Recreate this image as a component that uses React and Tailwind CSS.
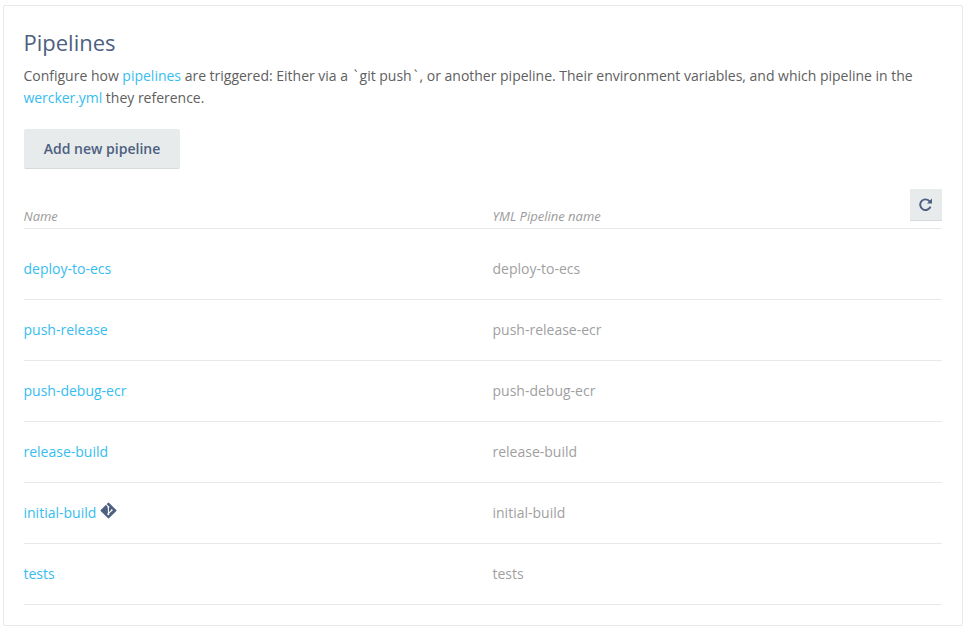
import React from "react";

const pipelines = [
  { name: "deploy-to-ecs", yml: "deploy-to-ecs" },
  { name: "push-release", yml: "push-release-ecr" },
  { name: "push-debug-ecr", yml: "push-debug-ecr" },
  { name: "release-build", yml: "release-build" },
  { name: "initial-build", yml: "initial-build", git: true },
  { name: "tests", yml: "tests" },
];

function GitIcon() {
  return (
    <svg className="-mt-[5px] ml-1 h-[17px] w-[17px]" viewBox="0 0 16 16">
      <path d="M8 1 L15 8 L8 15 L1 8 Z" fill="#4d5f80" stroke="#4d5f80" strokeLinejoin="round" />
      <path d="M5.8 2.2 L7.9 4.4 V11.5 M8 10.8 L11 7.8" stroke="#fff" strokeWidth="1" fill="none" />
      <circle cx="7.9" cy="4.8" r="0.9" fill="#fff" />
      <circle cx="7.8" cy="11.5" r="1" fill="#fff" />
      <circle cx="11" cy="7.8" r="0.9" fill="#fff" />
    </svg>
  );
}

function RefreshIcon() {
  return (
    <svg className="mr-px h-[13px] w-[13px]" viewBox="0 0 12 12" fill="none">
      <path d="M9.9 3.2 A4.9 4.9 0 1 0 10.6 7.9" stroke="#4d5f80" strokeWidth="1.8" />
      <path d="M12 0.4 V5 H7.4 Z" fill="#4d5f80" />
    </svg>
  );
}

function Backtick() {
  return <span className="px-[2px]">`</span>;
}

export default function App() {
  return (
    <div className="h-[632px] w-[968px] bg-white pl-[3px] pt-[5px] font-['Open_Sans',sans-serif] text-sm text-[#606060]">
      <main className="h-[621px] w-[960px] rounded-[2px] border border-[#e6e8e9] px-5 pt-[21px]">
        <h1 className="-ml-[0.5px] text-[22px] leading-[30px] text-[#4d5f80]">Pipelines</h1>
        <p className="-ml-[0.5px] mt-2 w-[910px] leading-[22px] tracking-[-0.008px]">
          Configure how <a className="text-[#36bdf0]">pipelines</a> are triggered: Either via a <Backtick />git push<Backtick />, or another pipeline. Their environment variables, and which pipeline in the <a className="tracking-[-0.05px] text-[#36bdf0]">wercker.yml</a> they reference.
        </p>
        <button className="mt-5 h-10 w-[156px] rounded-[2px] border-b border-[#d5dadb] bg-[#e7ebec] font-semibold text-[#4d5f80]">Add new pipeline</button>
        <div className="mt-5 flex h-10 border-b border-[#e6e8e9] text-[13px] italic text-[#9b9b9b]">
          <span className="-ml-[0.5px] w-[469px] pt-[18px]">Name</span>
          <span className="flex-1 pt-[18px]">YML Pipeline name</span>
          <button className="flex h-8 w-8 items-center justify-center border-b border-[#d5dadb] bg-[#e7ebec]"><RefreshIcon /></button>
        </div>
        <div className="pt-[10px]">
          {pipelines.map((p) => (
            <div key={p.name} className="flex h-[61px] items-center border-b border-[#e6e8e9]">
              <div className="-ml-[0.5px] flex w-[469px] items-center text-[#36bdf0]"><a>{p.name}</a>{p.git && <GitIcon />}</div>
              <span className="text-[#9f9f9f]">{p.yml}</span>
            </div>
          ))}
        </div>
      </main>
    </div>
  );
}
